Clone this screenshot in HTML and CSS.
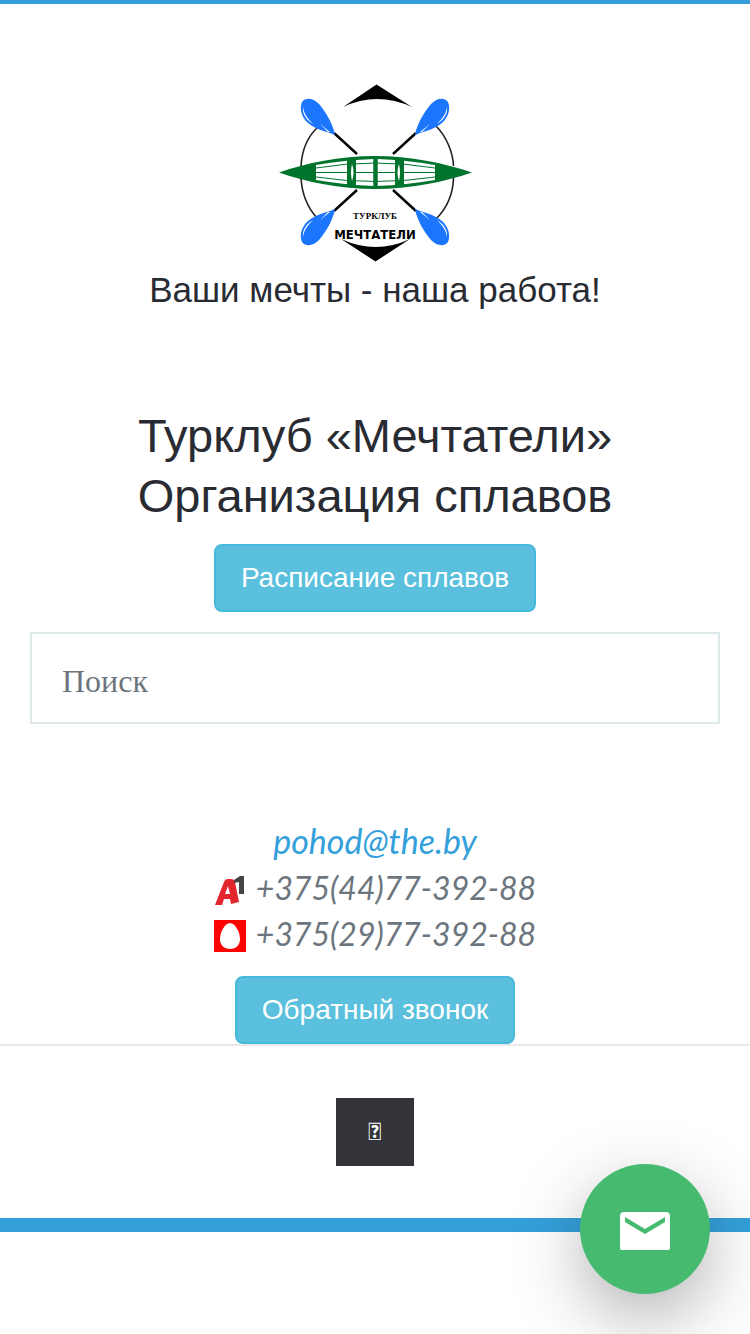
FILE: index.html
```html
<!DOCTYPE html>
<html lang="ru">
<head>
    <meta charset="UTF-8">
    <meta name="viewport" content="width=device-width, initial-scale=1.0">
    <title>Турклуб «Мечтатели»</title>
    <link rel="stylesheet" href="styles.css">
</head>
<body>
    <header class="header">
        <a href="/" class="logo" aria-label="Турклуб Мечтатели">
            <svg width="210" height="190" viewBox="0 0 210 190">
                <defs>
                    <g id="paddle">
                        <path d="M64 58L87 79" stroke="#000" stroke-width="2.4"/>
                        <path fill="#1b76fd" d="M65 60C63 49 56 37 49 29C43 23 36 22 32 27C29 34 32 43 38 48C45 54 54 56 60 58Z"/>
                        <path fill="#fff" d="M33 32C32 38 36 45 43 49C38 44 34 39 33 32ZM50 49L60 57L58 57Z"/>
                    </g>
                </defs>
                <!-- ring -->
                <path d="M48 52C38 61 32 75 31 91M31 103C32 120 38 133 47 143M166 51C176 61 183 77 183.500 91M183.500 103C183 119 177 133 166 144" fill="none" stroke="#222" stroke-width="1.600"/>
                <path d="M106.500 9.500L142 32Q107 16 73 32Z"/>
                <path d="M71 164Q106 180 140 164L105.500 186.500Z"/>
                <!-- paddles -->
                <use href="#paddle"/>
                <use href="#paddle" transform="translate(210 0) scale(-1 1)"/>
                <use href="#paddle" transform="translate(0 194) scale(1 -1)"/>
                <use href="#paddle" transform="translate(210 194) scale(-1 -1)"/>
                <!-- canoe -->
                <path fill="#00742c" d="M9 97.500C36 88 70 81 105 81S174 88 202 97.500C174 107 140 114 105 114S36 107 9 97.500Z"/>
                <path fill="#fff" d="M46 90Q75 85 104 84V111Q75 110 46 105Z"/>
                <path fill="#fff" d="M165 90Q136 85 107 84V111Q136 110 165 105Z"/>
                <path fill="#00742c" d="M77 84H86V111H77ZM134 84H125V111H134Z"/>
                <path d="M104 84V111M107 84V111" stroke="#00742c" stroke-width="1.500"/>
                <path d="M46 97.500H165M46 93Q105 83 165 93M46 102Q105 111 165 102" fill="none" stroke="#00742c"/>
                <path fill="#fff" d="M82 89Q85 97.500 82 106Q80 97.500 82 89ZM129 89Q126 97.500 129 106Q131 97.500 129 89Z"/>
                <text class="logo-top" x="105" y="144" text-anchor="middle">ТУРКЛУБ</text>
                <text class="logo-name" x="105" y="164" text-anchor="middle">МЕЧТАТЕЛИ</text>
            </svg>
        </a>
        <p class="slogan">Ваши мечты - наша работа!</p>
        <h1>Турклуб «Мечтатели»<br>Организация сплавов</h1>
        <button type="button" class="btn">Расписание сплавов</button>
        <form class="search">
            <input type="search" name="q" placeholder="Поиск" aria-label="Поиск">
        </form>
        <address class="contacts">
            <a href="mailto:pohod@the.by">pohod@the.by</a>
            <div class="phone">
                <svg width="32" height="32" viewBox="0 0 32 32">
                    <path fill="#e3262b" fill-rule="evenodd" d="M1 31L10 8Q11 5 14 5H17Q20 5 21 8L25 28L17 30L16 25H10L8 31ZM11 20H16L14 12Z"/>
                    <path fill="#444" d="M20 6L26 2H30V20H25V8L20 9Z"/>
                </svg>
                <span>+375(44)77-392-88</span>
            </div>
            <div class="phone">
                <svg width="32" height="32" viewBox="0 0 32 32">
                    <path fill="#f00" d="M0 0H32V32H0Z"/>
                    <path fill="#fff" d="M16 3C21 3 26 12 26 19C26 25 22 29 16 29S6 25 6 19C6 12 11 3 16 3Z"/>
                </svg>
                <span>+375(29)77-392-88</span>
            </div>
        </address>
        <button type="button" class="btn">Обратный звонок</button>
    </header>
    <nav class="menu">
        <button type="button" class="menu-toggle" aria-label="Меню">&#xf0c9;</button>
    </nav>
    <a href="mailto:pohod@the.by" class="mail" aria-label="Написать нам">
        <svg width="50" height="38" viewBox="0 0 50 38">
            <path fill="#fff" fill-rule="evenodd" d="M4 0H46Q50 0 50 4V36Q50 38 48 38H2Q0 38 0 36V4Q0 0 4 0ZM5 5V10L25 22L45 10V5L25 17Z"/>
        </svg>
    </a>
</body>
</html>
```

FILE: styles.css
```css
* {
    box-sizing: border-box;
}

body {
    margin: 0;
    background: #fff;
    color: #292b33;
    font-family: "Liberation Sans", Arial, sans-serif;
}

.header {
    display: flex;
    flex-direction: column;
    align-items: center;
    padding: 71px 30px 0;
    border-top: 4px solid #34a0db;
    border-bottom: 2px solid #e9e9e9;
    text-align: center;
}

.logo svg {
    display: block;
}

.logo-top {
    font: bold 9px "Liberation Serif", serif;
}

.logo-name {
    font: bold 13px "DejaVu Sans Condensed", sans-serif;
}

.slogan {
    margin: 0;
    font-size: 35px;
    line-height: 50px;
}

h1 {
    margin: 91px 0 18px;
    font-size: 47px;
    font-weight: normal;
    line-height: 60px;
}

.btn {
    height: 68px;
    padding: 0 25px;
    border: 2px solid #46b8da;
    border-radius: 8px;
    background: #5bc0de;
    color: #fff;
    font: 28px "Liberation Sans", Arial, sans-serif;
}

.search {
    width: 100%;
    margin: 20px 0 94px;
}

.search input {
    display: block;
    width: 100%;
    height: 92px;
    padding: 6px 30px 0;
    border: 2px solid #dce8e9;
    border-radius: 0;
    background: #fff;
    font: 32px "Liberation Serif", "Times New Roman", serif;
    appearance: none;
}

.search input::placeholder {
    color: #6c757d;
}

.contacts {
    margin-bottom: 19px;
    color: #6c757d;
    font: italic 32px/46px Lato, sans-serif;
}

.contacts a {
    color: #34a0db;
    font-size: 34px;
    text-decoration: none;
}

.phone {
    display: flex;
    align-items: center;
    gap: 10px;
}

.phone svg {
    margin-top: 4px;
}

.menu {
    display: flex;
    justify-content: center;
    padding: 52px 30px;
    border-bottom: 14px solid #34a0db;
}

.menu-toggle {
    width: 78px;
    height: 68px;
    padding: 0 0 4px;
    border: 0;
    background: #323439;
    color: #fff;
    font: bold 24px Lato, sans-serif;
}

.mail {
    position: fixed;
    right: 40px;
    bottom: 40px;
    display: flex;
    align-items: center;
    justify-content: center;
    width: 130px;
    height: 130px;
    padding-top: 4px;
    border-radius: 50%;
    background: #46bb70;
    box-shadow: 0 24px 68px rgba(31, 32, 41, .34);
}
```
